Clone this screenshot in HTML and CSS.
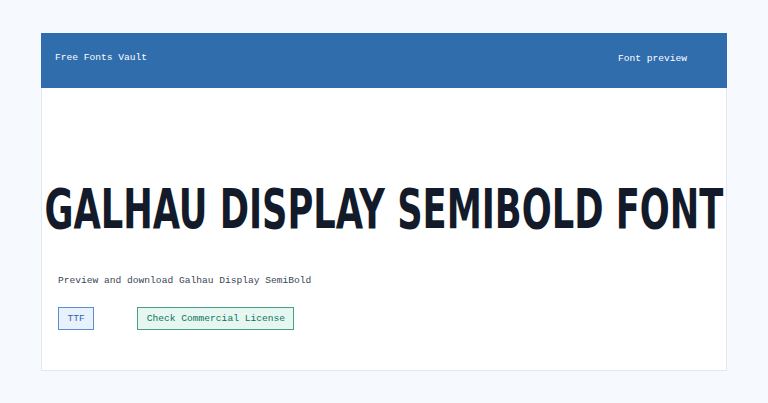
FILE: index.html
```html
<!DOCTYPE html>
<html lang="en">
<head>
    <meta charset="UTF-8">
    <meta name="viewport" content="width=device-width, initial-scale=1.0">
    <title>Galhau Display SemiBold Font - Free Fonts Vault</title>
    <link rel="stylesheet" href="styles.css">
</head>
<body>
    <div class="card">
        <header class="site-header">
            <div class="brand">Free Fonts Vault</div>
            <nav class="nav">Font preview</nav>
        </header>

        <main class="content">
            <h1 class="font-title"><span class="font-sample">GALHAU DISPLAY SEMIBOLD FONT</span></h1>
            <p class="lead">Preview and download Galhau Display SemiBold</p>
            <div class="actions">
                <a class="btn btn-format" href="#">TTF</a>
                <a class="btn btn-license" href="#">Check Commercial License</a>
            </div>
        </main>
    </div>
</body>
</html>
```

FILE: styles.css
```css
body {
    margin: 0;
    padding: 33px 0;
    background-color: #f6f9fe;
    font-family: 'Liberation Mono', monospace;
    font-size: 9.6px;
    color: #333;
}

.card {
    width: 686px;
    margin: 0 auto;
    background: white;
    border: 1px solid #e3e8f0;
    box-sizing: border-box;
}

.site-header {
    display: flex;
    justify-content: space-between;
    align-items: center;
    height: 55px;
    padding: 0 40px 0 14px;
    background: #2f6dad;
    color: white;
    margin: -1px -1px 0;
}

.brand {
    margin-top: -6px;
}

.nav {
    margin-top: -4px;
}

/* the sample is set wide, then squeezed to the display face's narrow proportions */
.font-title {
    display: flex;
    justify-content: center;
    margin: 0;
    padding-top: 93px;
    font-family: 'DejaVu Sans', sans-serif;
    font-stretch: condensed;
    font-weight: bold;
    font-size: 56px;
    line-height: 1;
    color: #131b2b;
    white-space: nowrap;
}

.font-sample {
    display: inline-block;
    transform: scaleX(0.7);
}

.content {
    padding: 0 16px 40px;
}

.lead {
    margin: 38px 0 0;
    color: #3a4556;
}

.actions {
    display: flex;
    gap: 43px;
    margin-top: 21px;
}

.btn {
    display: inline-block;
    padding: 5px 8.5px;
    text-decoration: none;
    border: 1px solid;
}

.btn-format {
    background: #e8f1fe;
    border-color: #5b8fd1;
    color: #2e64a8;
}

.btn-license {
    background: #e6f6f1;
    border-color: #4aa087;
    color: #0f7358;
}
```
